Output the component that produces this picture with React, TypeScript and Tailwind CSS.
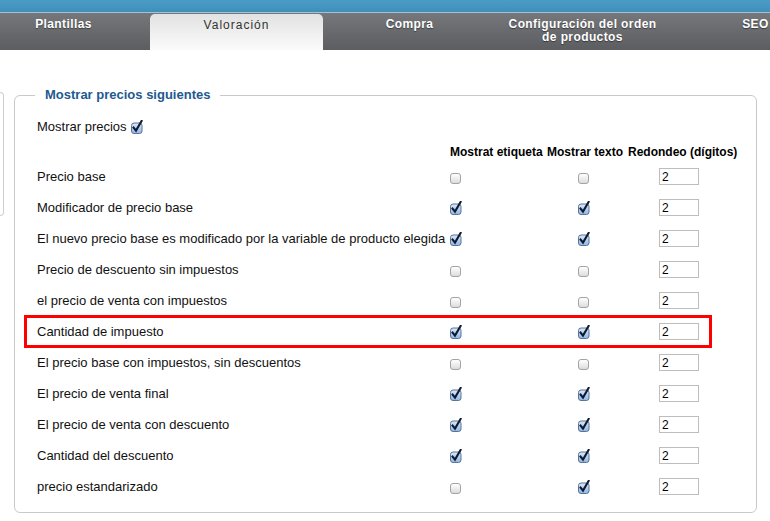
const rows: { label: string; tag: boolean; text: boolean; mark?: boolean }[] = [
  { label: "Precio base", tag: false, text: false },
  { label: "Modificador de precio base", tag: true, text: true },
  { label: "El nuevo precio base es modificado por la variable de producto elegida", tag: true, text: true },
  { label: "Precio de descuento sin impuestos", tag: false, text: false },
  { label: "el precio de venta con impuestos", tag: false, text: false },
  { label: "Cantidad de impuesto", tag: true, text: true, mark: true },
  { label: "El precio base con impuestos, sin descuentos", tag: false, text: false },
  { label: "El precio de venta final", tag: true, text: true },
  { label: "El precio de venta con descuento", tag: true, text: true },
  { label: "Cantidad del descuento", tag: true, text: true },
  { label: "precio estandarizado", tag: false, text: true },
];

const tabs = ["Plantillas", "Valoración", "Compra", "Configuración del orden de productos", "SEO"];

function Check({ on }: { on: boolean }) {
  if (!on) {
    return (
      <span className="block h-[11px] w-[11px] rounded-[3px] border border-[#a3a3a3] bg-gradient-to-b from-white to-[#dcdcdc]" />
    );
  }
  return (
    <svg width="13" height="14" viewBox="0 0 13 14" className="block -mt-[3px]">
      <defs>
        <linearGradient id="cb" x1="0" y1="0" x2="0" y2="1">
          <stop offset="0" stopColor="#dbe9f8" />
          <stop offset="1" stopColor="#8fb7e4" />
        </linearGradient>
      </defs>
      <rect x="0.5" y="3" width="10.5" height="10.5" rx="2.5" fill="url(#cb)" stroke="#5b7494" />
      <path d="M2.6 7.6 L5 10.6 L10.6 1" fill="none" stroke="#0e1a33" strokeWidth="2.1" strokeLinecap="square" />
    </svg>
  );
}

export default function App() {
  return (
    <div className="h-[521px] w-[770px] overflow-hidden bg-white font-['Liberation_Sans',Arial,sans-serif] text-[13px] text-[#111]">
      <div className="h-[12px] bg-gradient-to-b from-[#4a9cc6] to-[#3f8fba]" />
      <div className="h-px bg-[#9ec3da]" />
      <div className="flex h-[37px] bg-gradient-to-b from-[#76777b] to-[#5c5d61]">
        <div className="-ml-[23px] flex">
          {tabs.map((t) =>
            t === "Valoración" ? (
              <div
                key={t}
                className="mt-px w-[173px] rounded-t-[5px] bg-gradient-to-b from-[#e2e2e2] to-[#fbfbfb] pt-[4px] text-center text-[12px] leading-[14px] tracking-[1px] text-[#333]"
              >
                {t}
              </div>
            ) : (
              <div
                key={t}
                className="w-[173px] shrink-0 pt-[5px] text-center text-[12px] font-bold leading-[13px] tracking-[0.4px] text-white [text-shadow:0_1px_1px_rgba(0,0,0,0.45)]"
              >
                {t === "Configuración del orden de productos" ? (
                  <>
                    Configuración del orden
                    <br />
                    de productos
                  </>
                ) : (
                  t
                )}
              </div>
            )
          )}
        </div>
      </div>

      <div className="flex">
        <div className="mt-[42px] h-[124px] w-[4px] rounded-r-[6px] border-y border-r border-[#cfcfcf]" />
        <fieldset className="ml-[10px] mt-[37px] w-[743px] rounded-[6px] border border-[#c9c9c9] pb-[10px] pl-[22px]">
          <legend className="-ml-[2px] px-[10px] text-[13px] font-bold leading-[16px] text-[#22598f]">
            Mostrar precios siguientes
          </legend>
          <div className="mt-[14px] flex h-[20px] items-center gap-[4px]">
            <span>Mostrar precios</span>
            <span className="mt-[2px]">
              <Check on />
            </span>
          </div>
          <div className="mt-[6px] grid h-[18px] grid-cols-[413px_97px_81px_120px] items-center text-[12px] font-bold text-black">
            <span />
            <span>Mostrat etiqueta</span>
            <span>Mostrar texto</span>
            <span>Redondeo (dígitos)</span>
          </div>
          {rows.map((r) => (
            <div key={r.label} className="relative grid h-[31px] grid-cols-[413px_97px_81px_120px] items-center">
              {r.mark && (
                <div className="absolute -left-[13px] -top-px h-[33px] w-[688px] border-[3px] border-[#f00]" />
              )}
              <span className="whitespace-nowrap">{r.label}</span>
              <span className="flex h-[14px] items-end">
                <Check on={r.tag} />
              </span>
              <span className="flex h-[14px] items-end pl-[31px]">
                <Check on={r.text} />
              </span>
              <span className="pl-[31px]">
                <input
                  readOnly
                  value="2"
                  className="block h-[17px] w-[40px] border border-[#bdbdbd] px-[2px] text-[12px] leading-[15px] text-black outline-none"
                />
              </span>
            </div>
          ))}
        </fieldset>
      </div>
    </div>
  );
}
